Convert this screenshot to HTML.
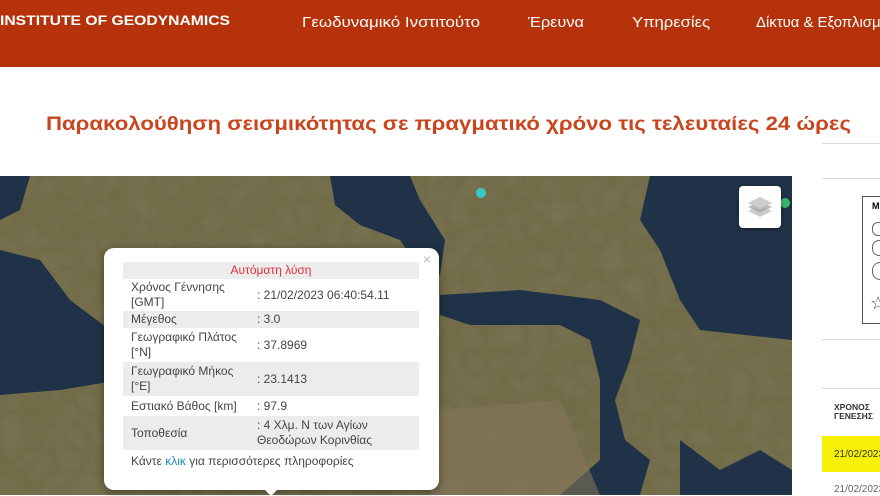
<!DOCTYPE html>
<html><head><meta charset="utf-8"><style>
html,body{margin:0;padding:0;width:880px;height:495px;overflow:hidden;background:#fff;font-family:"Liberation Sans",sans-serif}
.hdr{position:absolute;left:0;top:0;width:880px;height:67px;background:#b5320a}
svg text{font-family:"Liberation Sans","DejaVu Sans",sans-serif}
.map{position:absolute;left:0;top:176px;width:792px;height:319px;overflow:hidden}
.pop{position:absolute;left:104px;top:248px;width:335px;height:242px;background:#fff;border-radius:10px;box-shadow:0 2px 8px rgba(0,0,0,.4);font-size:12px;color:#444}
.pop table{position:absolute;left:19px;top:14px;width:296px;border-collapse:collapse;table-layout:fixed}
.pop td{padding:0 0 0 8px;line-height:15px;vertical-align:middle}
.pop tr.g{background:#ececec}
.side{position:absolute;left:822px;top:0;width:58px;height:495px}
.ln{position:absolute;left:0;width:58px;height:1px;background:#ddd}
</style></head><body>
<div class="hdr"></div>
<svg style="position:absolute;left:0;top:0" width="880" height="160">
<text x="0" y="25" fill="#fff" font-weight="bold" font-size="14" textLength="230" lengthAdjust="spacingAndGlyphs">INSTITUTE OF GEODYNAMICS</text>
<g fill="#fff" font-size="14.5">
<text x="302" y="27" textLength="178" lengthAdjust="spacingAndGlyphs">Γεωδυναμικό Ινστιτούτο</text>
<text x="528" y="27" textLength="56" lengthAdjust="spacingAndGlyphs">Έρευνα</text>
<text x="632" y="27" textLength="78" lengthAdjust="spacingAndGlyphs">Υπηρεσίες</text>
<text x="756" y="27" textLength="140" lengthAdjust="spacingAndGlyphs">Δίκτυα &amp; Εξοπλισμός</text>
</g>
<text x="46" y="130" fill="#c8461e" font-weight="bold" font-size="19" textLength="805" lengthAdjust="spacingAndGlyphs">Παρακολούθηση σεισμικότητας σε πραγματικό χρόνο τις τελευταίες 24 ώρες</text>
</svg>
<div class="map">
<svg width="792" height="319" viewBox="0 176 792 319">
<defs><filter id="n"><feTurbulence baseFrequency="0.04" numOctaves="3" seed="3"/><feColorMatrix values="0 0 0 0 0.3 0 0 0 0 0.3 0 0 0 0 0.18 0 0 0 0.25 0"/></filter></defs>
<rect x="0" y="176" width="792" height="319" fill="#706a47"/>
<rect x="0" y="176" width="792" height="319" filter="url(#n)"/>
<g fill="#1f3247">
<path d="M330 176 L410 176 L420 200 L445 240 L440 275 L420 270 L400 240 L360 225 L335 205Z"/>
<path d="M440 295 L520 290 L600 300 L640 320 L630 360 L615 400 L625 440 L650 460 L640 495 L560 495 L600 460 L600 380 L590 340 L560 325 L470 325 L440 315Z"/>
<path d="M650 176 L792 176 L792 340 L700 330 L680 300 L660 250 L640 220Z"/>
<path d="M0 250 L40 260 L70 300 L110 330 L150 350 L200 360 L120 380 L60 390 L0 395Z"/>
<path d="M0 176 L30 176 L20 210 L0 220Z"/>
<path d="M680 440 L720 470 L760 450 L792 470 L792 495 L680 495Z"/>
</g>
<g fill="#847459" opacity=".6"><path d="M440 410 L560 400 L600 495 L430 495Z"/></g>
<circle cx="481" cy="193" r="5" fill="#3cc7c7"/>
<circle cx="785" cy="203" r="5" fill="#3cb56a"/>
</svg>
<div style="position:absolute;left:739px;top:10px;width:42px;height:42px;background:#fff;border-radius:4px;box-shadow:0 1px 4px rgba(0,0,0,.4)">
<svg width="42" height="42"><g fill="#aaa"><path d="M9 25 L21 31 L33 25 L21 19Z" opacity=".6"/><path d="M9 21 L21 27 L33 21 L21 15Z" opacity=".8"/><path d="M9 17 L21 23 L33 17 L21 11Z" fill="#ccc"/></g></svg></div>
</div>
<div class="pop">
<div style="position:absolute;right:8px;top:3px;color:#bbb;font-size:14px">×</div>
<table>
<col style="width:126px"><col style="width:170px">
<tr class="g"><td colspan="2" style="text-align:center;color:#e0303a;height:17px;padding:0">Αυτόματη λύση</td></tr>
<tr><td style="height:32px">Χρόνος Γέννησης [GMT]</td><td>: 21/02/2023 06:40:54.11</td></tr>
<tr class="g"><td style="height:17px">Μέγεθος</td><td>: 3.0</td></tr>
<tr><td style="height:34px">Γεωγραφικό Πλάτος [°N]</td><td>: 37.8969</td></tr>
<tr class="g"><td style="height:34px">Γεωγραφικό Μήκος [°E]</td><td>: 23.1413</td></tr>
<tr><td style="height:20px;white-space:nowrap">Εστιακό Βάθος [km]</td><td>: 97.9</td></tr>
<tr class="g"><td style="height:34px">Τοποθεσία</td><td style="padding-right:30px">: 4 Χλμ. Ν των Αγίων Θεοδώρων Κορινθίας</td></tr>
<tr><td colspan="2" style="height:22px">Κάντε <span style="color:#1a8ab5">κλικ</span> για περισσότερες πληροφορίες</td></tr>
</table>
</div>
<div style="position:absolute;left:264px;top:489px;border:7px solid transparent;border-top-color:#fff;border-bottom:0"></div>
<div class="side">
<div class="ln" style="top:143px"></div>
<div class="ln" style="top:178px"></div>
<div style="position:absolute;left:40px;top:196px;width:20px;height:126px;border:1px solid #555;border-right:0"></div>
<div style="position:absolute;left:50px;top:201px;font-size:9px;font-weight:bold">M</div>
<div style="position:absolute;left:50px;top:222px;width:10px;height:12px;border:1px solid #666;border-right:0;border-radius:6px 0 0 6px"></div>
<div style="position:absolute;left:50px;top:240px;width:10px;height:14px;border:1px solid #666;border-right:0;border-radius:7px 0 0 7px"></div>
<div style="position:absolute;left:50px;top:262px;width:10px;height:16px;border:1px solid #666;border-right:0;border-radius:8px 0 0 8px"></div>
<div style="position:absolute;left:48px;top:293px;font-size:18px;color:#555">☆</div>
<div class="ln" style="top:339px"></div>
<div class="ln" style="top:388px"></div>
<div style="position:absolute;left:12px;top:403px;font-size:8.5px;font-weight:bold;line-height:9px;color:#333">ΧΡΟΝΟΣ<br>ΓΕΝΕΣΗΣ</div>
<div style="position:absolute;left:0;top:436px;width:58px;height:36px;background:#f6f106"></div>
<div style="position:absolute;left:12px;top:449px;font-size:10px;color:#333">21/02/2023</div>
<div style="position:absolute;left:12px;top:484px;font-size:10px;color:#666">21/02/2023</div>
</div>
</body></html>
